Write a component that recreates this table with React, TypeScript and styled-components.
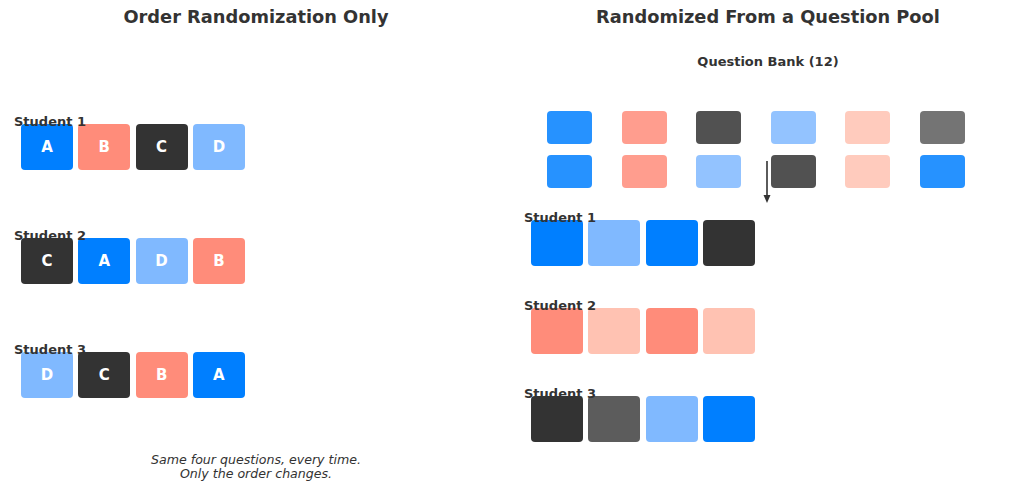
import * as React from 'react';
import styled, { createGlobalStyle } from 'styled-components';

const GlobalStyle = createGlobalStyle`
  html, body {
    margin: 0;
    padding: 0;
    background: #ffffff;
  }
  body {
    font-family: 'DejaVu Sans', 'Liberation Sans', sans-serif;
    color: #333333;
  }
`;

const COLORS: Record<string, string> = {
  blue: '#007fff',
  coral: '#ff8c7a',
  dark: '#333333',
  lightBlue: '#80b9ff',
  lightCoral: '#ffc2b2',
  gray: '#5c5c5c',
};

const Page = styled.div`
  width: 1024px;
  height: 493px;
  display: flex;
  overflow: hidden;
`;

const Panel = styled.section`
  width: 512px;
  display: flex;
  flex-direction: column;
  padding-top: 6px;
  position: relative;
`;

const Title = styled.h1`
  margin: 0;
  font-size: 17.8px;
  line-height: 22px;
  font-weight: bold;
  text-align: center;
`;

const StudentList = styled.div<{ $top: number; $gap: number; $left: number }>`
  display: flex;
  flex-direction: column;
  gap: ${(p) => p.$gap}px;
  margin-top: ${(p) => p.$top}px;
  padding-left: ${(p) => p.$left}px;
`;

const StudentRow = styled.div`
  display: flex;
  flex-direction: column;
`;

const StudentLabel = styled.div`
  font-size: 13px;
  line-height: 15px;
  font-weight: bold;
  margin-bottom: -5px;
  position: relative;
  z-index: 1;
`;

const BoxRow = styled.div`
  display: flex;
  gap: 5.3px;
  padding-left: 7px;
`;

const QuestionBox = styled.div<{ $color: string }>`
  width: 52px;
  height: 46px;
  border-radius: 4px;
  background: ${(p) => p.$color};
  color: #ffffff;
  font-size: 15px;
  font-weight: bold;
  display: flex;
  align-items: center;
  justify-content: center;
`;

const Note = styled.p`
  margin: 55px 0 0;
  font-size: 12.6px;
  line-height: 14px;
  font-style: italic;
  text-align: center;
`;

const BankLabel = styled.div`
  margin-top: 27px;
  font-size: 13px;
  line-height: 14px;
  font-weight: bold;
  text-align: center;
`;

const BankGrid = styled.div`
  margin: 42px 0 0 35px;
  display: grid;
  grid-template-columns: repeat(6, 45px);
  column-gap: 29.6px;
  row-gap: 11px;
  position: relative;
`;

const BankBox = styled.div<{ $color: string }>`
  height: 33px;
  border-radius: 4px;
  background: ${(p) => p.$color};
  opacity: 0.85;
`;

const Arrow = styled.svg`
  position: absolute;
  left: 215px;
  top: 50px;
  overflow: visible;
`;

type Row = { name: string; items: { color: string; letter?: string }[] };

const orderRows: Row[] = [
  {
    name: 'Student 1',
    items: [
      { color: 'blue', letter: 'A' },
      { color: 'coral', letter: 'B' },
      { color: 'dark', letter: 'C' },
      { color: 'lightBlue', letter: 'D' },
    ],
  },
  {
    name: 'Student 2',
    items: [
      { color: 'dark', letter: 'C' },
      { color: 'blue', letter: 'A' },
      { color: 'lightBlue', letter: 'D' },
      { color: 'coral', letter: 'B' },
    ],
  },
  {
    name: 'Student 3',
    items: [
      { color: 'lightBlue', letter: 'D' },
      { color: 'dark', letter: 'C' },
      { color: 'coral', letter: 'B' },
      { color: 'blue', letter: 'A' },
    ],
  },
];

const poolRows: Row[] = [
  {
    name: 'Student 1',
    items: [{ color: 'blue' }, { color: 'lightBlue' }, { color: 'blue' }, { color: 'dark' }],
  },
  {
    name: 'Student 2',
    items: [{ color: 'coral' }, { color: 'lightCoral' }, { color: 'coral' }, { color: 'lightCoral' }],
  },
  {
    name: 'Student 3',
    items: [{ color: 'dark' }, { color: 'gray' }, { color: 'lightBlue' }, { color: 'blue' }],
  },
];

const bank = [
  'blue', 'coral', 'dark', 'lightBlue', 'lightCoral', 'gray',
  'blue', 'coral', 'lightBlue', 'dark', 'lightCoral', 'blue',
];

const Students: React.FC<{ rows: Row[]; top: number; gap: number; left: number }> = ({
  rows,
  top,
  gap,
  left,
}) => (
  <StudentList $top={top} $gap={gap} $left={left}>
    {rows.map((row) => (
      <StudentRow key={row.name}>
        <StudentLabel>{row.name}</StudentLabel>
        <BoxRow>
          {row.items.map((item, i) => (
            <QuestionBox key={i} $color={COLORS[item.color]}>
              {item.letter}
            </QuestionBox>
          ))}
        </BoxRow>
      </StudentRow>
    ))}
  </StudentList>
);

export default function App() {
  return (
    <Page>
      <GlobalStyle />
      <Panel>
        <Title>Order Randomization Only</Title>
        <Students rows={orderRows} top={86} gap={58} left={14} />
        <Note>
          Same four questions, every time.
          <br />
          Only the order changes.
        </Note>
      </Panel>
      <Panel>
        <Title>Randomized From a Question Pool</Title>
        <BankLabel>Question Bank (12)</BankLabel>
        <BankGrid>
          {bank.map((c, i) => (
            <BankBox key={i} $color={COLORS[c]} />
          ))}
          <Arrow width="10" height="42" viewBox="0 0 10 42">
            <line x1="5" y1="0" x2="5" y2="35" stroke="#333333" strokeWidth="1.6" />
            <polygon points="1.5,34 8.5,34 5,42" fill="#333333" />
          </Arrow>
        </BankGrid>
        <Students rows={poolRows} top={22} gap={32} left={12} />
      </Panel>
    </Page>
  );
}
